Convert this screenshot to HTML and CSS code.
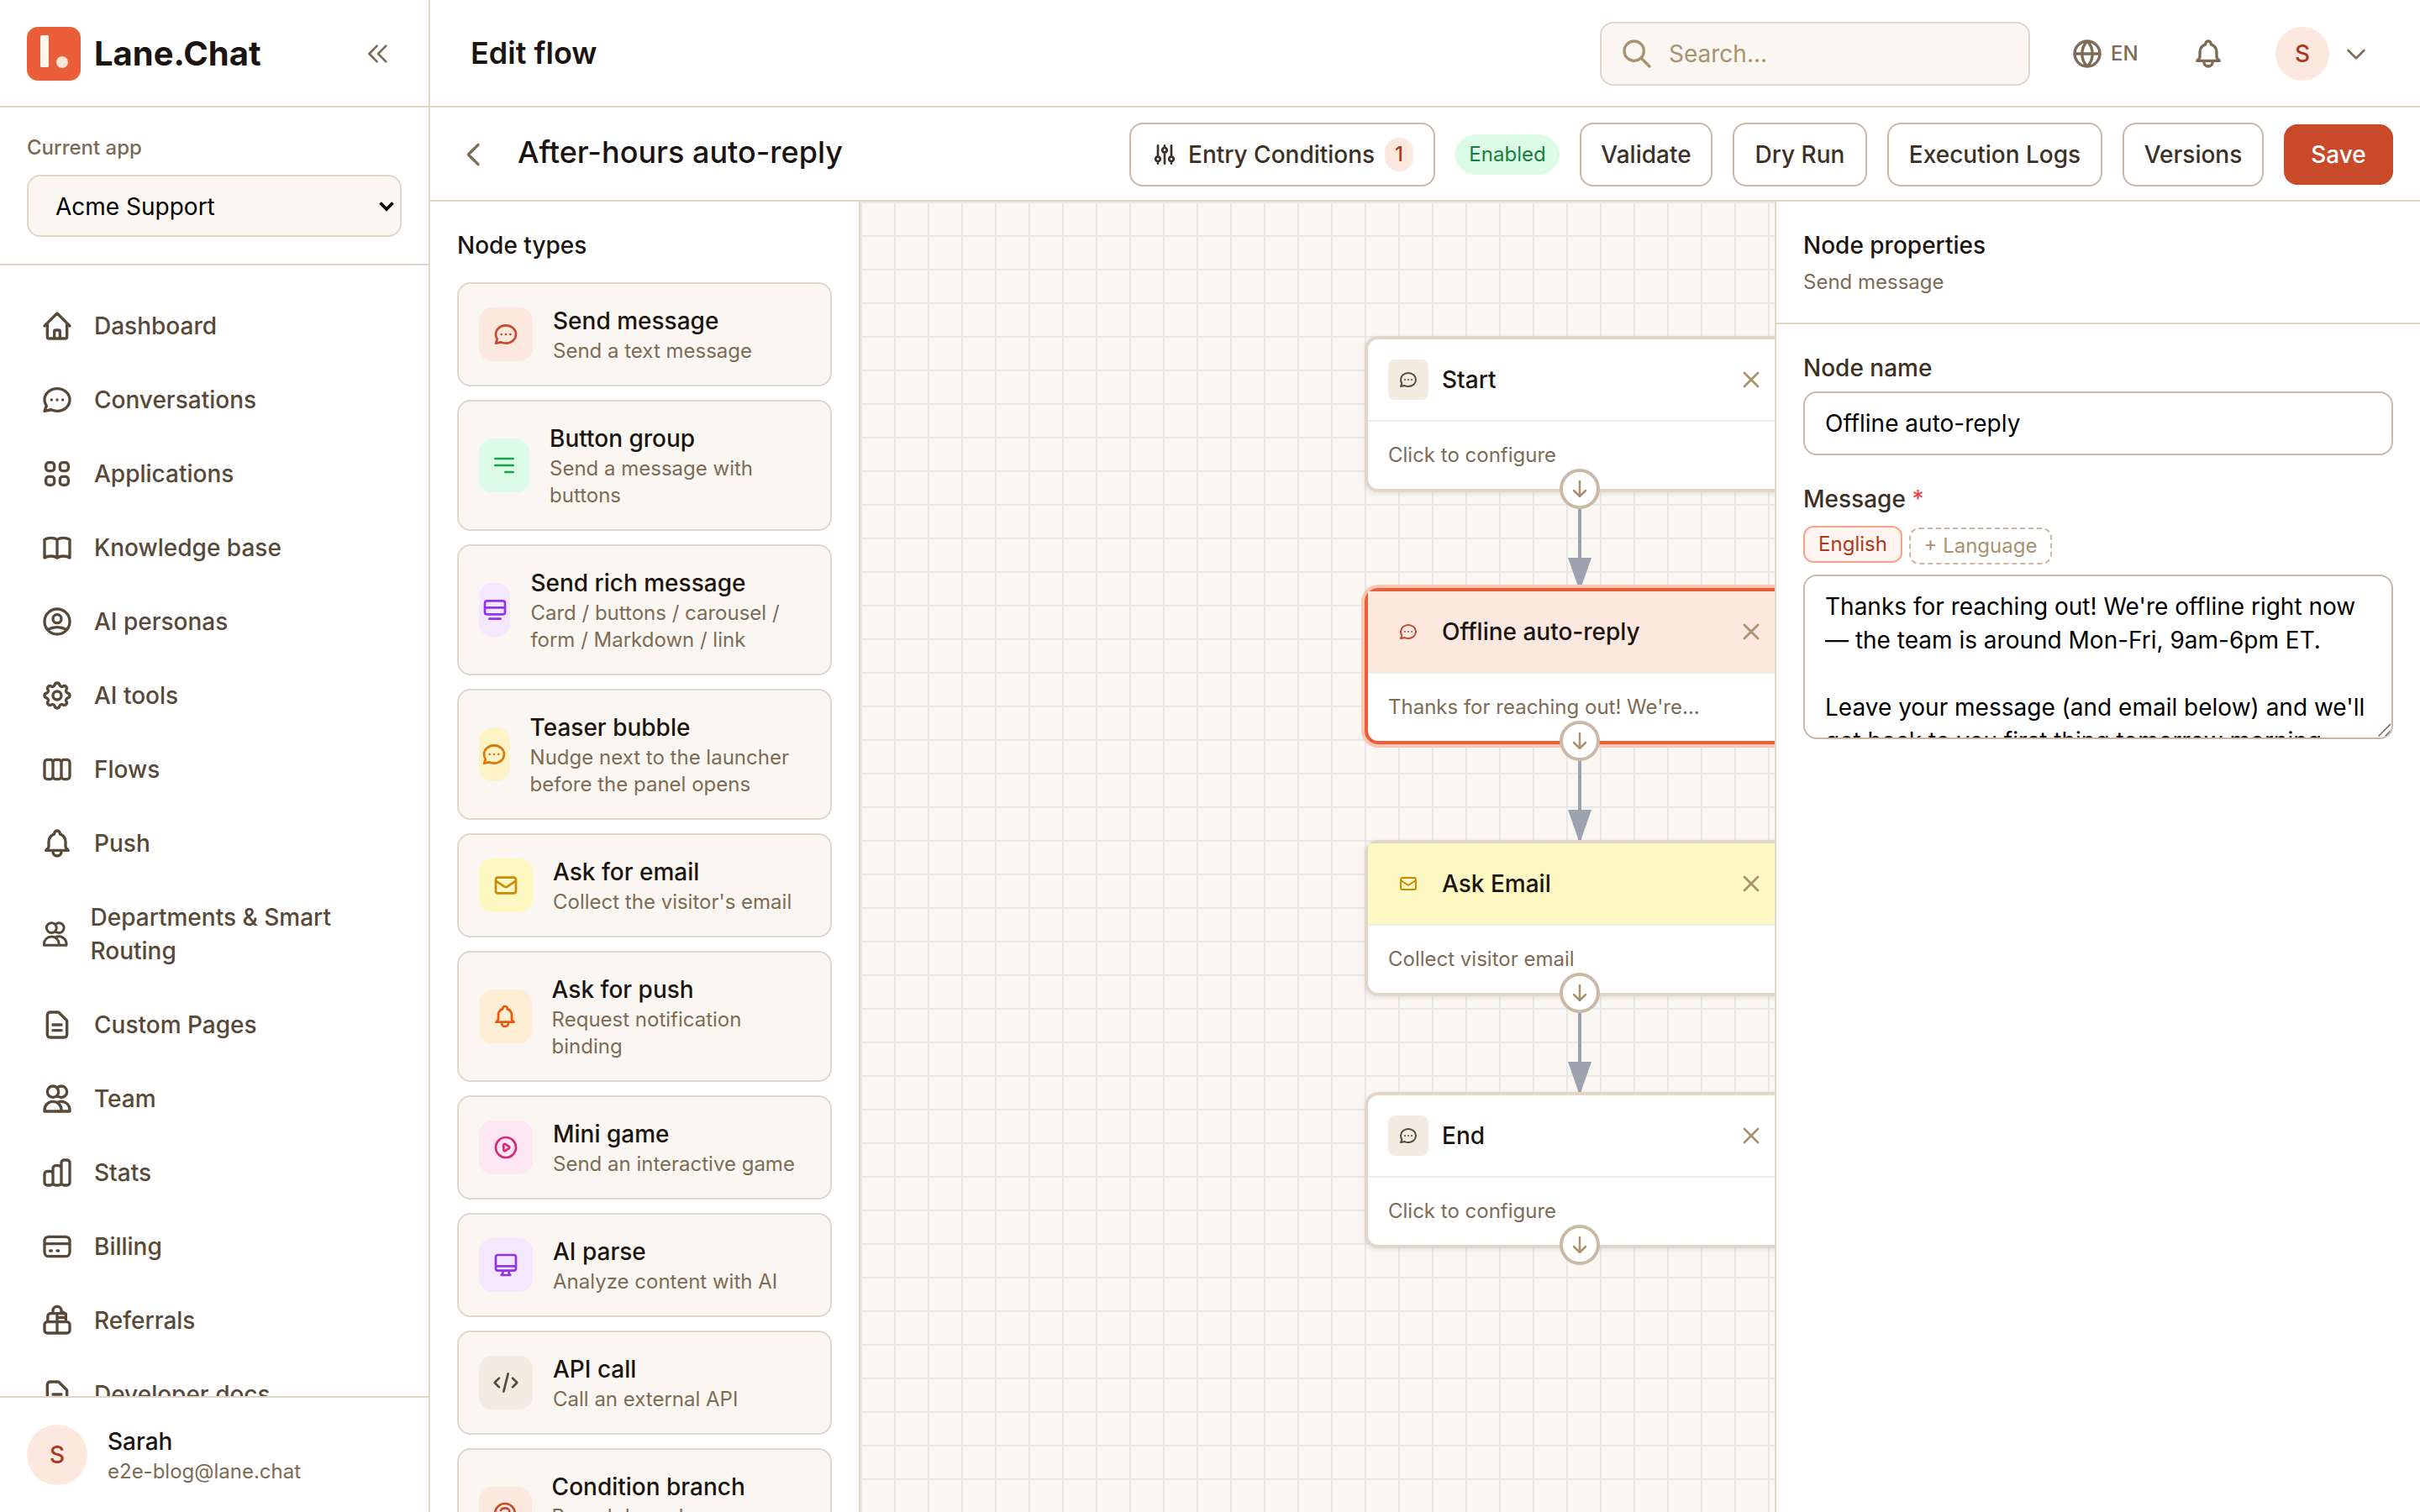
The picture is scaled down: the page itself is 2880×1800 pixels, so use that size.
FILE: index.html
```html
<!DOCTYPE html>
<html lang="en">
<head>
<meta charset="utf-8">
<title>Edit flow - Lane.Chat</title>
<link rel="stylesheet" href="styles.css">
</head>
<body>
<svg class="sprite" aria-hidden="true">
  <symbol id="home" viewBox="0 0 24 24"><path d="M3 12l2-2m0 0l7-7 7 7M5 10v10a1 1 0 001 1h3m10-11l2 2m-2-2v10a1 1 0 01-1 1h-3m-6 0a1 1 0 001-1v-4a1 1 0 011-1h2a1 1 0 011 1v4a1 1 0 001 1m-6 0h6"/></symbol>
  <symbol id="chat" viewBox="0 0 24 24"><path d="M8 12h.01M12 12h.01M16 12h.01M21 12c0 4.418-4.03 8-9 8a9.863 9.863 0 01-4.255-.949L3 20l1.395-3.72C3.512 15.042 3 13.574 3 12c0-4.418 4.03-8 9-8s9 3.582 9 8z"/></symbol>
  <symbol id="grid" viewBox="0 0 24 24"><path d="M4 6a2 2 0 012-2h2a2 2 0 012 2v2a2 2 0 01-2 2H6a2 2 0 01-2-2V6zM14 6a2 2 0 012-2h2a2 2 0 012 2v2a2 2 0 01-2 2h-2a2 2 0 01-2-2V6zM4 16a2 2 0 012-2h2a2 2 0 012 2v2a2 2 0 01-2 2H6a2 2 0 01-2-2v-2zM14 16a2 2 0 012-2h2a2 2 0 012 2v2a2 2 0 01-2 2h-2a2 2 0 01-2-2v-2z"/></symbol>
  <symbol id="book" viewBox="0 0 24 24"><path d="M12 6.253v13m0-13C10.832 5.477 9.246 5 7.5 5S4.168 5.477 3 6.253v13C4.168 18.477 5.754 18 7.5 18s3.332.477 4.5 1.253m0-13C13.168 5.477 14.754 5 16.5 5c1.747 0 3.332.477 4.5 1.253v13C19.832 18.477 18.247 18 16.5 18c-1.746 0-3.332.477-4.5 1.253"/></symbol>
  <symbol id="user" viewBox="0 0 24 24"><path d="M5.121 17.804A13.937 13.937 0 0112 16c2.5 0 4.847.655 6.879 1.804M15 10a3 3 0 11-6 0 3 3 0 016 0zm6 2a9 9 0 11-18 0 9 9 0 0118 0z"/></symbol>
  <symbol id="cog" viewBox="0 0 24 24"><path d="M10.325 4.317c.426-1.756 2.924-1.756 3.35 0a1.724 1.724 0 002.573 1.066c1.543-.94 3.31.826 2.37 2.37a1.724 1.724 0 001.065 2.572c1.756.426 1.756 2.924 0 3.35a1.724 1.724 0 00-1.066 2.573c.94 1.543-.826 3.31-2.37 2.37a1.724 1.724 0 00-2.572 1.065c-.426 1.756-2.924 1.756-3.35 0a1.724 1.724 0 00-2.573-1.066c-1.543.94-3.31-.826-2.37-2.37a1.724 1.724 0 00-1.065-2.572c-1.756-.426-1.756-2.924 0-3.35a1.724 1.724 0 001.066-2.573c-.94-1.543.826-3.31 2.37-2.37.996.608 2.296.07 2.572-1.065z"/><path d="M15 12a3 3 0 11-6 0 3 3 0 016 0z"/></symbol>
  <symbol id="boards" viewBox="0 0 24 24"><path d="M9 17V7m0 10a2 2 0 01-2 2H5a2 2 0 01-2-2V7a2 2 0 012-2h2a2 2 0 012 2m0 10a2 2 0 002 2h2a2 2 0 002-2M9 7a2 2 0 012-2h2a2 2 0 012 2m0 10V7m0 10a2 2 0 002 2h2a2 2 0 002-2V7a2 2 0 00-2-2h-2a2 2 0 00-2 2"/></symbol>
  <symbol id="bell" viewBox="0 0 24 24"><path d="M15 17h5l-1.405-1.405A2.032 2.032 0 0118 14.158V11a6.002 6.002 0 00-4-5.659V5a2 2 0 10-4 0v.341C7.67 6.165 6 8.388 6 11v3.159c0 .538-.214 1.055-.595 1.436L4 17h5m6 0v1a3 3 0 11-6 0v-1m6 0H9"/></symbol>
  <symbol id="users" viewBox="0 0 24 24"><path d="M12 4.354a4 4 0 110 5.292M15 21H3v-1a6 6 0 0112 0v1zm0 0h6v-1a6 6 0 00-9-5.197M13 7a4 4 0 11-8 0 4 4 0 018 0z"/></symbol>
  <symbol id="doc" viewBox="0 0 24 24"><path d="M9 12h6m-6 4h6m2 5H7a2 2 0 01-2-2V5a2 2 0 012-2h5.586a1 1 0 01.707.293l5.414 5.414a1 1 0 01.293.707V19a2 2 0 01-2 2z"/></symbol>
  <symbol id="chart" viewBox="0 0 24 24"><path d="M9 19v-6a2 2 0 00-2-2H5a2 2 0 00-2 2v6a2 2 0 002 2h2a2 2 0 002-2zm0 0V9a2 2 0 012-2h2a2 2 0 012 2v10m-6 0a2 2 0 002 2h2a2 2 0 002-2m0 0V5a2 2 0 012-2h2a2 2 0 012 2v14a2 2 0 01-2 2h-2a2 2 0 01-2-2z"/></symbol>
  <symbol id="card" viewBox="0 0 24 24"><path d="M3 10h18M7 15h1m4 0h1m-7 4h12a3 3 0 003-3V8a3 3 0 00-3-3H6a3 3 0 00-3 3v8a3 3 0 003 3z"/></symbol>
  <symbol id="gift" viewBox="0 0 24 24"><path d="M5 13h14a2 2 0 012 2v4a2 2 0 01-2 2H5a2 2 0 01-2-2v-4a2 2 0 012-2zM12 7v14M5.3 13V9a2 2 0 012-2H12M9 6.800V5a3 3 0 016 0v2H9M15.200 5.500l3 1.800V13M14 7h4M13.500 9.900h4.700"/></symbol>
  <symbol id="dleft" viewBox="0 0 24 24"><path d="M11 19l-7-7 7-7m8 14l-7-7 7-7"/></symbol>
  <symbol id="left" viewBox="0 0 24 24"><path d="M15 19l-7-7 7-7"/></symbol>
  <symbol id="down" viewBox="0 0 24 24"><path d="M19 9l-7 7-7-7"/></symbol>
  <symbol id="search" viewBox="0 0 24 24"><path d="M21 21l-6-6m2-5a7 7 0 11-14 0 7 7 0 0114 0z"/></symbol>
  <symbol id="globe" viewBox="0 0 24 24"><path d="M21 12a9 9 0 11-18 0 9 9 0 0118 0zM3 12h18M12 3c2.600 2.500 3.700 5.600 3.700 9s-1.100 6.500-3.700 9c-2.600-2.500-3.700-5.600-3.700-9s1.100-6.500 3.700-9z"/></symbol>
  <symbol id="sliders" viewBox="0 0 24 24"><path d="M12 6V4m0 2a2 2 0 100 4m0-4a2 2 0 110 4m-6 8a2 2 0 100-4m0 4a2 2 0 110-4m0 4v2m0-6V4m6 6v10m6-2a2 2 0 100-4m0 4a2 2 0 110-4m0 4v2m0-6V4"/></symbol>
  <symbol id="menu" viewBox="0 0 24 24"><path d="M4 6h16M4 12h16m-7 6h7"/></symbol>
  <symbol id="rich" viewBox="0 0 24 24"><path d="M7 20h10M5 16h14a2 2 0 002-2V6a2 2 0 00-2-2H5a2 2 0 00-2 2v8a2 2 0 002 2zM3 10h18"/></symbol>
  <symbol id="mail" viewBox="0 0 24 24"><path d="M3 8l7.890 5.260a2 2 0 002.220 0L21 8M5 19h14a2 2 0 002-2V7a2 2 0 00-2-2H5a2 2 0 00-2 2v10a2 2 0 002 2z"/></symbol>
  <symbol id="play" viewBox="0 0 24 24"><path d="M14.752 11.168l-3.197-2.132A1 1 0 0010 9.870v4.263a1 1 0 001.555.832l3.197-2.132a1 1 0 000-1.664z"/><path d="M21 12a9 9 0 11-18 0 9 9 0 0118 0z"/></symbol>
  <symbol id="desktop" viewBox="0 0 24 24"><path d="M9.750 17L9 20l-1 1h8l-1-1-.75-3M3 13h18M5 17h14a2 2 0 002-2V5a2 2 0 00-2-2H5a2 2 0 00-2 2v10a2 2 0 002 2z"/></symbol>
  <symbol id="code" viewBox="0 0 24 24"><path d="M10 20l4-16m4 4l4 4-4 4M6 16l-4-4 4-4"/></symbol>
  <symbol id="question" viewBox="0 0 24 24"><path d="M8.228 9c.549-1.165 2.030-2 3.772-2 2.210 0 4 1.343 4 3 0 1.400-1.278 2.575-3.006 2.907-.542.104-.994.540-.994 1.093m0 3h.010M21 12a9 9 0 11-18 0 9 9 0 0118 0z"/></symbol>
  <symbol id="close" viewBox="0 0 24 24"><path d="M6 18L18 6M6 6l12 12"/></symbol>
  <symbol id="arrow" viewBox="0 0 24 24"><path d="M19 14l-7 7m0 0l-7-7m7 7V3"/></symbol>
</svg>

<div class="app">
  <aside class="sidebar">
    <div class="brand">
      <svg class="logo" viewBox="0 0 64 64"><rect width="64" height="64" rx="13" fill="#ea5f3a"/><rect x="16" y="10" width="10" height="38" rx="1.500" fill="#fff6ea"/><circle cx="42" cy="42" r="7" fill="#fde5da"/></svg>
      <span class="brand-name">Lane.Chat</span>
      <button class="collapse"><svg class="icon sm"><use href="#dleft"/></svg></button>
    </div>
    <div class="app-picker">
      <div class="picker-label">Current app</div>
      <div class="select"><span>Acme Support</span><svg class="caret" viewBox="0 0 20 16"><path d="M2.500 3.500L10 11l7.500-7.500" fill="none" stroke="#000" stroke-width="3.800"/></svg></div>
    </div>
    <nav class="nav">
      <a class="nav-item"><svg class="icon"><use href="#home"/></svg>Dashboard</a>
      <a class="nav-item"><svg class="icon"><use href="#chat"/></svg>Conversations</a>
      <a class="nav-item"><svg class="icon"><use href="#grid"/></svg>Applications</a>
      <a class="nav-item"><svg class="icon"><use href="#book"/></svg>Knowledge base</a>
      <a class="nav-item"><svg class="icon"><use href="#user"/></svg>AI personas</a>
      <a class="nav-item"><svg class="icon"><use href="#cog"/></svg>AI tools</a>
      <a class="nav-item"><svg class="icon"><use href="#boards"/></svg>Flows</a>
      <a class="nav-item"><svg class="icon"><use href="#bell"/></svg>Push</a>
      <a class="nav-item"><svg class="icon squeezed"><use href="#users"/></svg><span>Departments &amp; Smart Routing</span></a>
      <a class="nav-item"><svg class="icon"><use href="#doc"/></svg>Custom Pages</a>
      <a class="nav-item"><svg class="icon"><use href="#users"/></svg>Team</a>
      <a class="nav-item"><svg class="icon"><use href="#chart"/></svg>Stats</a>
      <a class="nav-item"><svg class="icon"><use href="#card"/></svg>Billing</a>
      <a class="nav-item"><svg class="icon"><use href="#gift"/></svg>Referrals</a>
      <a class="nav-item"><svg class="icon"><use href="#doc"/></svg>Developer docs</a>
    </nav>
    <div class="account">
      <div class="avatar large">S</div>
      <div class="account-text">
        <div class="account-name">Sarah</div>
        <div class="account-mail">e2e-blog@lane.chat</div>
      </div>
    </div>
  </aside>

  <main class="main">
    <header class="topbar">
      <h1 class="page-title">Edit flow</h1>
      <div class="search"><svg class="icon"><use href="#search"/></svg><span>Search...</span></div>
      <button class="lang"><svg class="icon"><use href="#globe"/></svg>EN</button>
      <button class="bell"><svg class="icon"><use href="#bell"/></svg></button>
      <div class="profile"><div class="avatar">S</div><svg class="icon sm"><use href="#down"/></svg></div>
    </header>

    <div class="toolbar">
      <button class="back"><svg class="icon"><use href="#left"/></svg></button>
      <h2 class="flow-title">After-hours auto-reply</h2>
      <div class="actions">
        <button class="btn entry"><svg class="icon sm"><use href="#sliders"/></svg>Entry Conditions<span class="count">1</span></button>
        <span class="status">Enabled</span>
        <button class="btn validate">Validate</button>
        <button class="btn dry">Dry Run</button>
        <button class="btn logs">Execution Logs</button>
        <button class="btn versions">Versions</button>
        <button class="btn primary">Save</button>
      </div>
    </div>

    <div class="workspace">
      <section class="palette">
        <h3 class="palette-title">Node types</h3>
        <div class="type"><div class="tile coral"><svg class="icon sm"><use href="#chat"/></svg></div><div><div class="type-name">Send message</div><div class="type-desc">Send a text message</div></div></div>
        <div class="type"><div class="tile green w60"><svg class="icon sm"><use href="#menu"/></svg></div><div><div class="type-name">Button group</div><div class="type-desc">Send a message with<br>buttons</div></div></div>
        <div class="type"><div class="tile purple w37"><svg class="icon sm"><use href="#rich"/></svg></div><div><div class="type-name">Send rich message</div><div class="type-desc">Card / buttons / carousel /<br>form / Markdown / link</div></div></div>
        <div class="type"><div class="tile amber w36"><svg class="icon sm"><use href="#chat"/></svg></div><div><div class="type-name">Teaser bubble</div><div class="type-desc">Nudge next to the launcher<br>before the panel opens</div></div></div>
        <div class="type"><div class="tile yellow"><svg class="icon sm"><use href="#mail"/></svg></div><div><div class="type-name">Ask for email</div><div class="type-desc">Collect the visitor's email</div></div></div>
        <div class="type"><div class="tile orange w62"><svg class="icon sm"><use href="#bell"/></svg></div><div><div class="type-name">Ask for push</div><div class="type-desc">Request notification<br>binding</div></div></div>
        <div class="type"><div class="tile pink"><svg class="icon sm"><use href="#play"/></svg></div><div><div class="type-name">Mini game</div><div class="type-desc">Send an interactive game</div></div></div>
        <div class="type"><div class="tile purple"><svg class="icon sm"><use href="#desktop"/></svg></div><div><div class="type-name">AI parse</div><div class="type-desc">Analyze content with AI</div></div></div>
        <div class="type"><div class="tile sand"><svg class="icon sm"><use href="#code"/></svg></div><div><div class="type-name">API call</div><div class="type-desc">Call an external API</div></div></div>
        <div class="type"><div class="tile coral w62"><svg class="icon sm"><use href="#question"/></svg></div><div><div class="type-name">Condition branch</div><div class="type-desc">Branch based on<br>conditions</div></div></div>
      </section>

      <section class="canvas">
        <svg class="edges" width="1088" height="1560">
          <defs><marker id="tip" markerWidth="10" markerHeight="7" refX="9" refY="3.5" orient="auto"><polygon points="0 0, 10 3.5, 0 7" fill="#9ca3af"/></marker></defs>
          <g stroke="#9ca3af" stroke-width="4">
            <line x1="856" y1="346" x2="856" y2="460" marker-end="url(#tip)"/>
            <line x1="856" y1="646" x2="856" y2="760" marker-end="url(#tip)"/>
            <line x1="856" y1="946" x2="856" y2="1060" marker-end="url(#tip)"/>
          </g>
        </svg>
        <article class="node n1">
          <header class="node-head"><div class="node-icon sand"><svg class="icon xs"><use href="#chat"/></svg></div><span class="node-name">Start</span><svg class="icon sm x"><use href="#close"/></svg></header>
          <div class="node-body">Click to configure</div>
          <div class="port"><svg class="icon xs"><use href="#arrow"/></svg></div>
        </article>
        <article class="node n2 selected">
          <header class="node-head coral"><div class="node-icon coral"><svg class="icon xs"><use href="#chat"/></svg></div><span class="node-name">Offline auto-reply</span><svg class="icon sm x"><use href="#close"/></svg></header>
          <div class="node-body">Thanks for reaching out! We're...</div>
          <div class="port"><svg class="icon xs"><use href="#arrow"/></svg></div>
        </article>
        <article class="node n3">
          <header class="node-head yellow"><div class="node-icon yellow"><svg class="icon xs"><use href="#mail"/></svg></div><span class="node-name">Ask Email</span><svg class="icon sm x"><use href="#close"/></svg></header>
          <div class="node-body">Collect visitor email</div>
          <div class="port"><svg class="icon xs"><use href="#arrow"/></svg></div>
        </article>
        <article class="node n4">
          <header class="node-head"><div class="node-icon sand"><svg class="icon xs"><use href="#chat"/></svg></div><span class="node-name">End</span><svg class="icon sm x"><use href="#close"/></svg></header>
          <div class="node-body">Click to configure</div>
          <div class="port"><svg class="icon xs"><use href="#arrow"/></svg></div>
        </article>
      </section>

      <section class="props">
        <div class="props-head">
          <h3 class="props-title">Node properties</h3>
          <div class="props-sub">Send message</div>
        </div>
        <div class="props-body">
          <div class="label">Node name</div>
          <div class="input">Offline auto-reply</div>
          <div class="label message-label">Message <span class="req">*</span></div>
          <div class="chips"><span class="chip">English</span><span class="chip add">+ Language</span></div>
          <div class="textarea">Thanks for reaching out! We're offline right now
— the team is around Mon-Fri, 9am-6pm ET.

Leave your message (and email below) and we'll
get back to you first thing tomorrow morning.<svg class="grip" viewBox="0 0 16 16"><path d="M0.500 15.500L15 1M8.500 15.500L15 9" fill="none" stroke="#555" stroke-width="1.300"/></svg></div>
        </div>
      </section>
    </div>
  </main>
</div>
</body>
</html>
```
FILE: styles.css
```css
* { box-sizing: border-box; }
body, h1, h2, h3 { margin: 0; }
body {
  font-family: Inter, "Liberation Sans", sans-serif;
  font-size: 28px;
  line-height: 40px;
  color: #1c1410;
  background: #fff;
  overflow: hidden;
}
button { font: inherit; border: 0; background: none; padding: 0; color: inherit; }
.sprite { display: none; }
.icon {
  width: 40px; height: 40px; flex: none; display: block;
  fill: none; stroke: currentColor; stroke-width: 2;
  stroke-linecap: round; stroke-linejoin: round;
}
.icon.sm { width: 32px; height: 32px; }
.icon.xs { width: 24px; height: 24px; }
.icon.squeezed { width: 35.500px; }

.app { display: flex; width: 2880px; height: 1800px; }

/* Sidebar */
.sidebar { width: 512px; flex: none; border-right: 2px solid #e2d6c8; display: flex; flex-direction: column; }
.brand { height: 128px; flex: none; border-bottom: 2px solid #e2d6c8; display: flex; align-items: center; padding: 2px 44px 0 32px; }
.logo { width: 64px; height: 64px; }
.brand-name { font-size: 40px; font-weight: 700; line-height: 56px; margin-left: 16px; }
.collapse { margin-left: auto; color: #7d6b55; }
.app-picker { padding: 32px 32px 32px; border-bottom: 2px solid #e2d6c8; flex: none; height: 188px; }
.picker-label { font-size: 24px; line-height: 32px; font-weight: 500; color: #7d6b55; margin-bottom: 16px; }
.select { height: 74px; border: 2px solid #e2d6c8; border-radius: 16px; background: #faf7f2; color: #000; display: flex; align-items: center; justify-content: space-between; padding: 2px 6px 0 32px; }
.caret { width: 20px; height: 16px; }
.nav { flex: 1; min-height: 0; overflow: hidden; padding: 32px 24px; display: flex; flex-direction: column; gap: 8px; }
.nav-item { display: flex; align-items: center; gap: 24px; padding: 20px 24px; flex: none; font-weight: 500; color: #574838; }
.account { height: 138px; flex: none; border-top: 2px solid #e2d6c8; padding: 0 32px; display: flex; align-items: center; gap: 24px; background: #fff; }
.avatar { width: 64px; height: 64px; border-radius: 50%; background: #fde8df; color: #a93a20; font-weight: 500; display: flex; align-items: center; justify-content: center; flex: none; }
.avatar.large { width: 72px; height: 72px; }
.account-name { font-weight: 500; }
.account-mail { font-size: 24px; line-height: 32px; color: #7d6b55; }

/* Top bars */
.main { flex: 1; min-width: 0; display: flex; flex-direction: column; }
.topbar { height: 128px; flex: none; border-bottom: 2px solid #e2d6c8; padding: 0 60px 0 48px; display: flex; align-items: center; }
.page-title { font-size: 36px; line-height: 56px; font-weight: 600; margin-right: auto; }
.search { width: 512px; height: 76px; border: 2px solid #e2d6c8; border-radius: 16px; background: #faf7f2; color: #a8936f; display: flex; align-items: center; gap: 18px; padding: 0 22px; margin: 2px 48px 0 0; }
.lang { display: flex; align-items: center; gap: 8px; font-size: 24px; font-weight: 500; line-height: 32px; color: #7d6b55; width: 144px; margin-top: 2px; }
.bell { color: #7d6b55; margin: 2px 60px 0 0; }
.profile { display: flex; align-items: center; gap: 16px; color: #7d6b55; margin-top: 2px; }

.toolbar { height: 112px; flex: none; border-bottom: 2px solid #e2d6c8; padding: 0 32px; display: flex; align-items: center; }
.back { color: #7d6b55; margin: 2px 32px 0 0; }
.flow-title { font-size: 36px; line-height: 56px; font-weight: 500; margin-bottom: 4px; }
.actions { margin: 2px 0 0 auto; display: flex; align-items: center; gap: 24px; }
.btn { height: 76px; border: 2px solid #c9b9a5; border-radius: 16px; font-weight: 500; color: #3d3025; display: flex; align-items: center; justify-content: center; white-space: nowrap; }
.entry { width: 364px; padding: 0 24px; justify-content: flex-start; gap: 12px; }
.count { margin-left: auto; width: 34px; height: 40px; border-radius: 50px; background: #fde8df; color: #a93a20; font-size: 24px; display: flex; align-items: center; justify-content: center; }
.status { width: 124px; height: 48px; border-radius: 24px; background: #dcfce7; color: #15803d; font-size: 24px; font-weight: 400; line-height: 48px; text-align: center; }
.validate { width: 158px; }
.dry { width: 160px; }
.logs { width: 256px; }
.versions { width: 168px; }
.primary { width: 130px; height: 72px; border: 0; background: #c84a29; color: #fff; }

.workspace { flex: 1; min-height: 0; display: flex; }

/* Node palette */
.palette { width: 512px; flex: none; border-right: 2px solid #e2d6c8; padding: 32px; overflow: hidden; display: flex; flex-direction: column; gap: 16px; }
.palette-title { font-size: 28px; font-weight: 500; margin-bottom: 8px; }
.type { flex: none; border: 2px solid #e2d6c8; border-radius: 16px; background: #faf7f2; padding: 24px; display: flex; align-items: center; gap: 24px; white-space: nowrap; }
.type-name { font-weight: 500; }
.type-desc { font-size: 24px; line-height: 32px; color: #7d6b55; }
.tile { width: 64px; height: 64px; border-radius: 16px; flex: none; display: flex; align-items: center; justify-content: center; }
.w62 { width: 62.600px; }
.w60 { width: 60px; }
.w37 { width: 37.400px; }
.w36 { width: 36.600px; }
.coral { background: #fde8df; color: #c84a29; }
.green { background: #dcfce7; color: #16a34a; }
.purple { background: #f3e8ff; color: #9333ea; }
.amber { background: #fef3c7; color: #d97706; }
.yellow { background: #fef9c3; color: #ca8a04; }
.orange { background: #ffedd5; color: #ea580c; }
.pink { background: #fce7f3; color: #db2777; }
.sand { background: #f2ebe1; color: #574838; }

/* Flow canvas: nodes sit at free positions */
.canvas {
  position: relative; flex: 1; min-width: 0; overflow: hidden;
  background-color: #faf7f2;
  background-image: linear-gradient(#e5e7eb 2px, transparent 2px), linear-gradient(90deg, #e5e7eb 2px, transparent 2px);
  background-size: 40px 40px;
}
.edges { position: absolute; left: 0; top: 0; }
.node { position: absolute; left: 600px; width: 512px; height: 186px; border: 4px solid #e2d6c8; border-radius: 16px; background: #fff; box-shadow: 0 2px 6px rgba(0, 0, 0, .08); }
.n1 { top: 160px; }
.n2 { top: 460px; }
.n3 { top: 760px; }
.n4 { top: 1060px; }
.node.selected { border-color: #ea5f3a; box-shadow: 0 0 0 4px #fcc7b3; }
.node-head { height: 98px; border-bottom: 2px solid #f2ebe1; padding: 0 32px 0 24px; display: flex; align-items: center; }
.node-icon { width: 48px; height: 48px; border-radius: 8px; margin-right: 16px; display: flex; align-items: center; justify-content: center; }
.node-name { font-weight: 500; color: #1c1410; }
.x { margin-left: auto; color: #a8936f; }
.node-body { padding: 24px; font-size: 24px; line-height: 32px; color: #7d6b55; }
.port { position: absolute; left: 228px; bottom: -24px; width: 48px; height: 48px; border: 4px solid #c9b9a5; border-radius: 50%; background: #fff; color: #a8936f; display: flex; align-items: center; justify-content: center; }
.port .icon { stroke-width: 2.500; }

/* Properties panel */
.props { width: 768px; flex: none; border-left: 2px solid #e2d6c8; }
.props-head { padding: 32px; border-bottom: 2px solid #e2d6c8; }
.props-title { font-size: 28px; font-weight: 500; }
.props-sub { font-size: 24px; line-height: 32px; color: #7d6b55; margin-top: 8px; }
.props-body { padding: 32px; }
.label { font-weight: 500; color: #3d3025; margin-bottom: 8px; }
.input { height: 76px; border: 2px solid #c9b9a5; border-radius: 16px; color: #000; line-height: 72px; padding: 0 24px; }
.message-label { margin: 32px 0 12px; }
.req { color: #ef4444; }
.chips { display: flex; gap: 8px; height: 46px; margin-bottom: 12px; font-size: 24px; line-height: 40px; }
.chip { width: 118px; height: 44px; text-align: center; border: 2px solid #f9a387; border-radius: 12px; background: #fff4f0; color: #a93a20; }
.chip.add { width: 170px; border: 2px dashed #c9b9a5; background: none; color: #a8936f; margin-top: 2px; }
.textarea { position: relative; height: 196px; overflow: hidden; border: 2px solid #c9b9a5; border-radius: 16px; padding: 16px 24px; color: #000; white-space: pre; }
.grip { position: absolute; right: 0; bottom: 1px; width: 16px; height: 16px; }
```
